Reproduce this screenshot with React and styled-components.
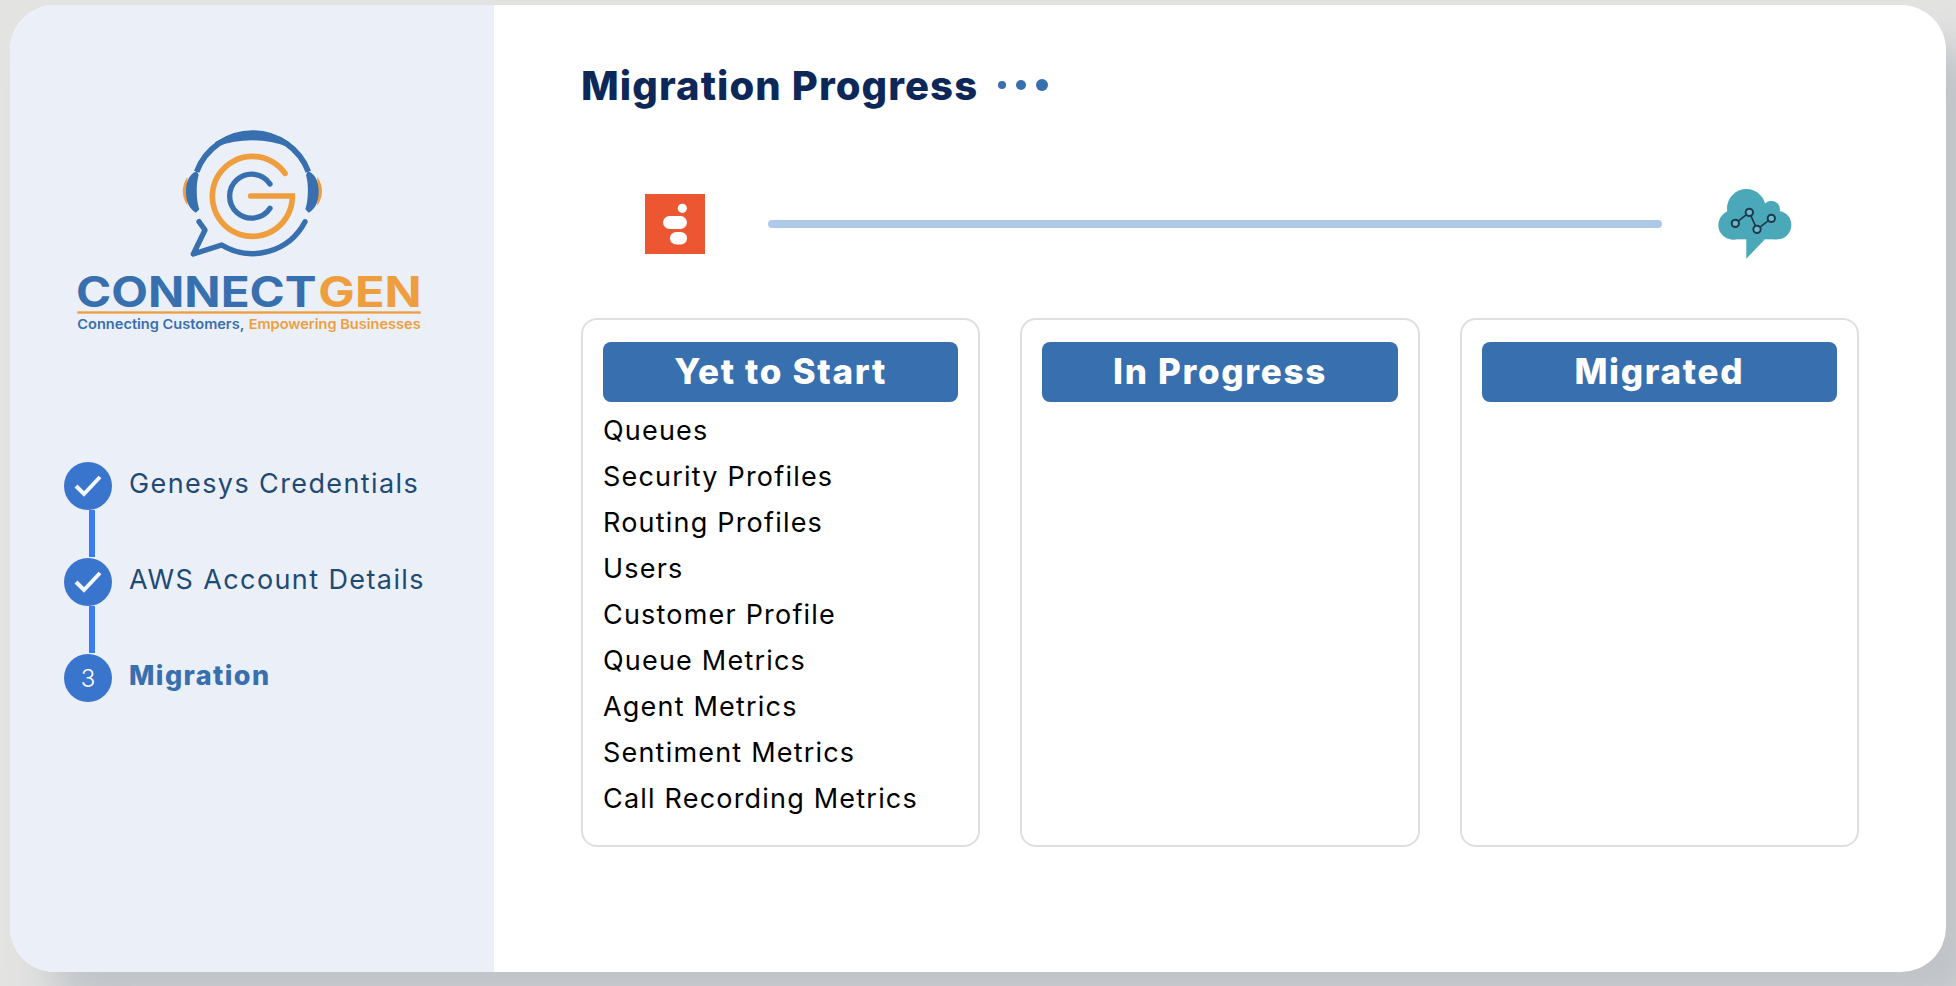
import React from 'react';
import styled, { createGlobalStyle } from 'styled-components';

const GlobalStyle = createGlobalStyle`
  html, body {
    margin: 0;
    height: 100%;
  }
  body {
    background: #e3e3e2;
    overflow: hidden;
    font-family: Inter, "Liberation Sans", sans-serif;
  }
  #root {
    height: 100%;
  }
`;

const Page = styled.div`
  box-sizing: border-box;
  height: 986px;
  padding: 5px 10px 14px;
`;

const Card = styled.div`
  display: flex;
  height: 100%;
  border-radius: 45px;
  overflow: hidden;
  background: #fff;
  box-shadow: 40px 40px 40px rgba(130, 140, 155, 0.35);
`;

const Sidebar = styled.aside`
  box-sizing: border-box;
  width: 484px;
  flex-shrink: 0;
  padding: 105px 0 0 40px;
  background: #ebeff7;
`;

const LogoSvg = styled.svg`
  display: block;
  width: 400px;
  height: 240px;
`;

const Steps = styled.ol`
  list-style: none;
  margin: 112px 0 0;
  padding: 0 0 0 14px;
`;

const Step = styled.li`
  display: flex;
  align-items: center;
  gap: 17px;
  height: 48px;
  margin-bottom: 48px;
  position: relative;
  &:not(:last-child)::after {
    content: '';
    position: absolute;
    left: 25px;
    top: 48px;
    width: 6px;
    height: 47px;
    background: #3b7cf6;
  }
`;

const StepCircle = styled.span`
  display: flex;
  align-items: center;
  justify-content: center;
  width: 48px;
  height: 48px;
  border-radius: 50%;
  background: #3a75cd;
  color: #fff;
  font-size: 24px;
  font-weight: 300;
`;

const StepLabel = styled.span`
  padding-bottom: 5px;
  font-size: 27px;
  letter-spacing: 1.4px;
  font-weight: ${(p) => (p.$active ? 800 : 400)};
  color: ${(p) => (p.$active ? '#386fae' : '#1f4a73')};
`;

const Main = styled.main`
  flex: 1;
  min-width: 0;
  padding: 56px 87px 0;
`;

const TitleRow = styled.div`
  display: flex;
  align-items: center;
  height: 48px;
`;

const Title = styled.h1`
  margin: 0;
  font-size: 40px;
  font-weight: 800;
  letter-spacing: 1.1px;
  color: #0d2858;
`;

const Dots = styled.div`
  display: flex;
  align-items: center;
  gap: 10px;
  margin-left: 20px;
`;

const Dot = styled.span`
  width: ${(p) => p.$size}px;
  height: ${(p) => p.$size}px;
  border-radius: 50%;
  background: #386fae;
`;

const Progress = styled.div`
  display: flex;
  align-items: center;
  height: 75px;
  margin-top: 77px;
  padding: 0 67px 0 64px;
`;

const GenesysIcon = styled.svg`
  display: block;
  width: 60px;
  height: 60px;
  flex-shrink: 0;
`;

const Track = styled.div`
  flex: 1;
  height: 8px;
  margin: 0 56px 0 63px;
  border-radius: 4px;
  background: #aec8e8;
`;

const CloudIcon = styled.svg`
  display: block;
  width: 74px;
  height: 70px;
  flex-shrink: 0;
`;

const Panels = styled.div`
  display: grid;
  grid-template-columns: repeat(3, 1fr);
  gap: 40px;
  margin-top: 57px;
`;

const Panel = styled.section`
  box-sizing: border-box;
  height: 529px;
  padding: 22px 20px 0;
  border: 2px solid #dfdfdf;
  border-radius: 16px;
`;

const PanelHeader = styled.h2`
  margin: 0 0 6px;
  height: 60px;
  line-height: 58px;
  border-radius: 8px;
  background: #386fae;
  color: #fff;
  font-size: 35px;
  font-weight: 800;
  letter-spacing: 1.7px;
  text-align: center;
`;

const Item = styled.div`
  height: 46px;
  line-height: 46px;
  font-size: 27px;
  letter-spacing: 1.2px;
  color: #000;
`;

const CheckMark = () => (
  <svg width="28" height="24" viewBox="0 0 28 24" fill="none">
    <path d="M2 12 L10 20 L26 3" stroke="#f4f7fc" strokeWidth="4" />
  </svg>
);

const Logo = () => (
  <LogoSvg viewBox="0 0 1200 720" fill="none">
    <path d="M412 200 Q385 243 412 287 Z" fill="#ee9e3d" />
    <path d="M802 200 Q830 243 802 287 Z" fill="#ee9e3d" />
    <path d="M440 183 C412 195 408 225 408 245 C408 270 415 295 438 308 L448 298 C438 270 438 220 446 195 Z" fill="#386fae" />
    <path d="M774 183 C802 195 806 225 806 245 C806 270 799 295 776 308 L766 298 C776 270 776 220 768 195 Z" fill="#386fae" />
    <path d="M440 185 A179 179 0 0 1 775 185" stroke="#386fae" strokeWidth="17" />
    <path d="M495 97 Q605 29 718 97 L714 110 Q605 72 500 110 Z" fill="#386fae" />
    <path
      d="M447 335 L465 360 L430 432 L515 405 A178 178 0 0 0 765 335"
      stroke="#386fae"
      strokeWidth="16"
      strokeLinecap="round"
      strokeLinejoin="round"
    />
    <path d="M705 190 A120 120 0 1 0 727 258 L602 258" stroke="#ee9e3d" strokeWidth="17" strokeLinecap="round" />
    <path d="M660 222 A66 66 0 1 0 660 295" stroke="#386fae" strokeWidth="16" strokeLinecap="round" />
    <text x="78" y="590" fontSize="126" fontWeight="700" fontFamily="Inter, sans-serif" fill="#386fae" textLength="722" lengthAdjust="spacingAndGlyphs">CONNECT</text>
    <text x="805" y="590" fontSize="126" fontWeight="700" fontFamily="Inter, sans-serif" fill="#ee9e3d" textLength="310" lengthAdjust="spacingAndGlyphs">GEN</text>
    <rect x="82" y="604" width="1030" height="7" fill="#ee9e3d" />
    <text x="82" y="657" fontSize="41" fontWeight="600" fontFamily="Inter, sans-serif" fill="#386fae" textLength="501" lengthAdjust="spacingAndGlyphs">Connecting Customers,</text>
    <text x="596" y="657" fontSize="41" fontWeight="600" fontFamily="Inter, sans-serif" fill="#ee9e3d" textLength="516" lengthAdjust="spacingAndGlyphs">Empowering Businesses</text>
  </LogoSvg>
);

const Genesys = () => (
  <GenesysIcon viewBox="0 0 60 60">
    <rect width="60" height="60" fill="#ec5732" />
    <circle cx="37.3" cy="14.3" r="4.6" fill="#fff" />
    <rect x="18" y="22" width="24" height="13" rx="6.5" fill="#fff" />
    <rect x="25" y="38" width="17" height="12.5" rx="6.25" fill="#fff" />
  </GenesysIcon>
);

const Cloud = () => (
  <CloudIcon viewBox="235 57 222 210">
    <g fill="#4aa8b8">
      <circle cx="320" cy="115" r="58" />
      <circle cx="395" cy="118" r="26" />
      <circle cx="280" cy="165" r="44" />
      <circle cx="412" cy="165" r="43" />
      <rect x="280" y="130" width="132" height="78" />
      <path d="M320 205 L320 266 L376 208 Z" />
    </g>
    <path d="M287 160 L329 127 L352 178 L395 145" stroke="#1f3a50" strokeWidth="5" fill="none" />
    <g fill="#6fbcc9" stroke="#1f3a50" strokeWidth="6">
      <circle cx="287" cy="160" r="11" />
      <circle cx="329" cy="127" r="11" />
      <circle cx="352" cy="178" r="11" />
      <circle cx="395" cy="145" r="11" />
    </g>
  </CloudIcon>
);

const items = [
  'Queues',
  'Security Profiles',
  'Routing Profiles',
  'Users',
  'Customer Profile',
  'Queue Metrics',
  'Agent Metrics',
  'Sentiment Metrics',
  'Call Recording Metrics',
];

const App = () => (
  <Page>
    <GlobalStyle />
    <Card>
      <Sidebar>
        <Logo />
        <Steps>
          <Step>
            <StepCircle><CheckMark /></StepCircle>
            <StepLabel>Genesys Credentials</StepLabel>
          </Step>
          <Step>
            <StepCircle><CheckMark /></StepCircle>
            <StepLabel>AWS Account Details</StepLabel>
          </Step>
          <Step>
            <StepCircle>3</StepCircle>
            <StepLabel $active>Migration</StepLabel>
          </Step>
        </Steps>
      </Sidebar>
      <Main>
        <TitleRow>
          <Title>Migration Progress</Title>
          <Dots>
            <Dot $size={8} />
            <Dot $size={10} />
            <Dot $size={12} />
          </Dots>
        </TitleRow>
        <Progress>
          <Genesys />
          <Track />
          <Cloud />
        </Progress>
        <Panels>
          <Panel>
            <PanelHeader>Yet to Start</PanelHeader>
            {items.map((item) => <Item key={item}>{item}</Item>)}
          </Panel>
          <Panel>
            <PanelHeader>In Progress</PanelHeader>
          </Panel>
          <Panel>
            <PanelHeader>Migrated</PanelHeader>
          </Panel>
        </Panels>
      </Main>
    </Card>
  </Page>
);

export default App;
